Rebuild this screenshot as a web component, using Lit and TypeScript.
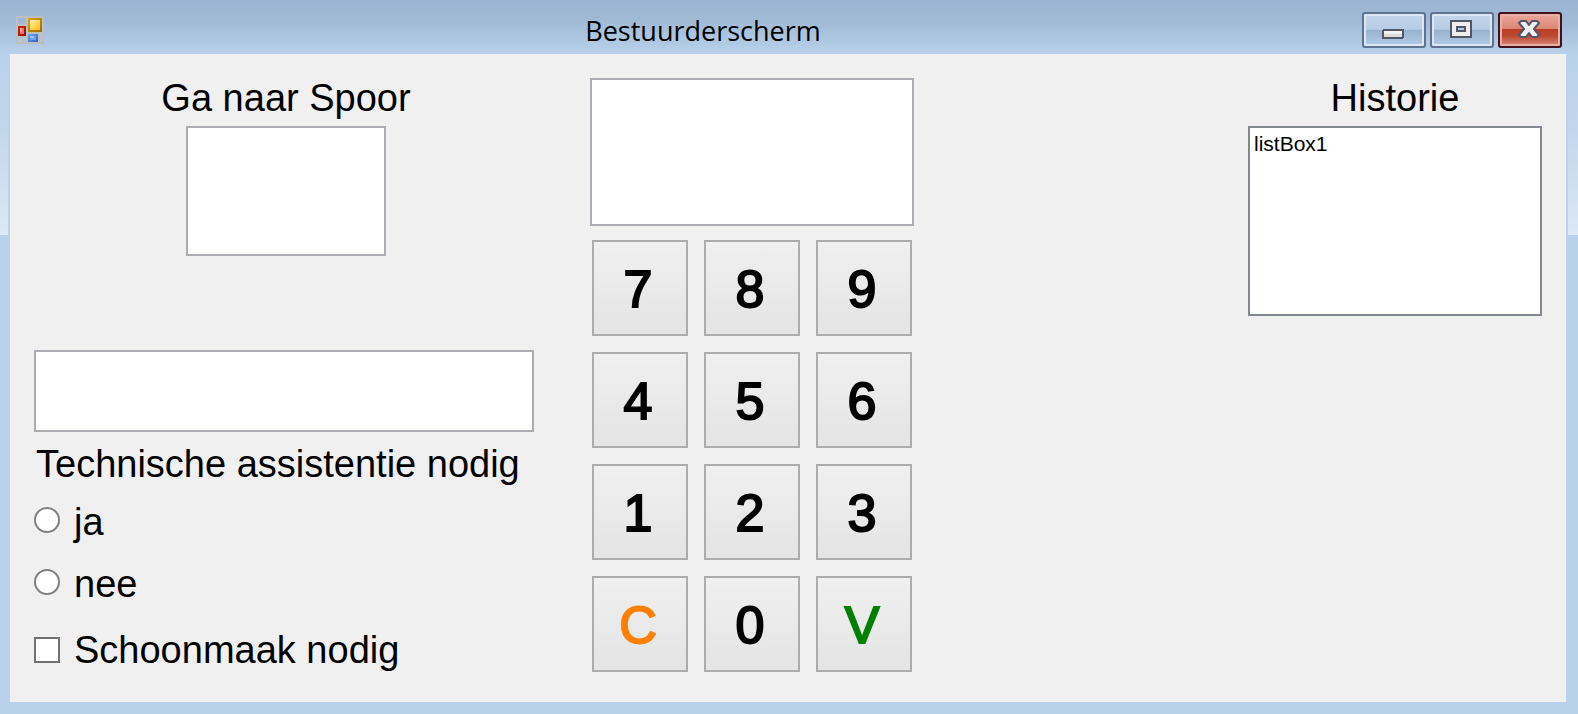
import { LitElement, html, css } from "lit";
import { customElement, property, state } from "lit/decorators.js";
import { classMap } from "lit/directives/class-map.js";

@customElement("window-title-bar")
export class WindowTitleBar extends LitElement {
  @property() caption = "";

  static styles = css`
    :host {
      display: flex;
      align-items: center;
      height: 54px;
      padding: 0 16px;
      box-sizing: border-box;
      background: linear-gradient(#9ab4d1, #a1bad6 40%, #b9d1ea);
    }
    .icon {
      flex: none;
      margin-top: 6px;
    }
    .caption {
      flex: 1;
      margin: 8px 0 0;
      text-align: center;
      font: 400 27px/40px "Open Sans", "Noto Sans", sans-serif;
      color: #000;
    }
    .buttons {
      display: flex;
      gap: 4px;
      margin-top: 6px;
    }
    .button {
      width: 64px;
      height: 36px;
      padding: 0;
      display: grid;
      place-items: center;
      border: 2px solid #5f7391;
      border-radius: 3px;
      background: linear-gradient(#c3d6ea, #b7cde5 48%, #98b1cd 50%, #b4cce6);
      box-shadow: inset 0 0 0 2px #dbe7f4;
    }
    .close {
      border-color: #43101f;
      background: linear-gradient(#e9a99c, #dc8675 46%, #b73e27 48%, #bb4730 68%, #d98a78);
      box-shadow: inset 0 0 0 2px #e8b0a5;
    }
    .glyph {
      display: block;
    }
  `;

  render() {
    return html`
      <svg class="icon" width="28" height="28" viewBox="0 0 28 28" shape-rendering="crispEdges" aria-hidden="true">
        <defs>
          <linearGradient id="y" x1="0" y1="0" x2="1" y2="1">
            <stop offset="0" stop-color="#fff0b0" /><stop offset="1" stop-color="#ffbe0a" />
          </linearGradient>
          <linearGradient id="yb" x1="0" y1="0" x2="1" y2="1">
            <stop offset="0" stop-color="#dba514" /><stop offset="1" stop-color="#996a00" />
          </linearGradient>
          <linearGradient id="b" x1="0" y1="0" x2="1" y2="1">
            <stop offset="0" stop-color="#6fa5e6" /><stop offset="1" stop-color="#2f60c4" />
          </linearGradient>
          <linearGradient id="r" x1="0" y1="0" x2="1" y2="1">
            <stop offset="0" stop-color="#d02a14" /><stop offset="1" stop-color="#841008" />
          </linearGradient>
        </defs>
        <path d="M1 1H27V27H1ZM11 1V27M1 9H11M1 21H11M11 17H27M23 17V27M7 21V27" fill="none" stroke="#bfbfbf" stroke-width="2" />
        <rect x="2" y="10" width="8" height="10" fill="url(#r)" />
        <rect x="4" y="12" width="4" height="6" fill="#e8786c" />
        <rect x="4" y="12" width="2" height="4" fill="#f2a39a" />
        <rect x="12" y="2" width="14" height="14" fill="url(#yb)" />
        <rect x="14" y="4" width="10" height="10" fill="url(#y)" />
        <rect x="12" y="18" width="10" height="8" fill="url(#b)" />
        <rect x="14" y="20" width="6" height="4" fill="#6ea0f4" />
        <rect x="14" y="20" width="4" height="2" fill="#9cc2fb" />
      </svg>
      <h1 class="caption">${this.caption}</h1>
      <div class="buttons">
        <button class="button" type="button" aria-label="Minimaliseren">
          <svg class="glyph" width="24" height="22" viewBox="0 0 24 22" shape-rendering="crispEdges">
            <rect x="1" y="11" width="20" height="8" rx="1" fill="#f2f2f2" stroke="#535666" stroke-width="2" />
            <rect x="2" y="15" width="18" height="3" fill="#dcdcdc" />
          </svg>
        </button>
        <button class="button" type="button" aria-label="Maximaliseren">
          <svg class="glyph" width="24" height="22" viewBox="0 0 24 22" shape-rendering="crispEdges">
            <path d="M1 2H21V18H1ZM7 8V12H15V8Z" fill="#eeeeee" stroke="#535666" stroke-width="2" fill-rule="evenodd" />
          </svg>
        </button>
        <button class="button close" type="button" aria-label="Sluiten">
          <svg class="glyph" width="24" height="22" viewBox="0 0 24 22">
            <path d="M3 2H8L11 6L14 2H19L21 4L16 10L21 16L19 18H14L11 14L8 18H3L1 16L6 10L1 4Z" fill="#f0f0f0" stroke="#535666" stroke-width="2" stroke-linejoin="round" />
          </svg>
        </button>
      </div>
    `;
  }
}

@customElement("app-root")
export class AppRoot extends LitElement {
  @state() private entry = "";

  private keys = ["7", "8", "9", "4", "5", "6", "1", "2", "3", "C", "0", "V"];

  static styles = css`
    :host {
      display: block;
      font-family: "Liberation Sans", Arial, sans-serif;
      color: #000;
    }
    * {
      box-sizing: border-box;
    }
    .window {
      display: flex;
      flex-direction: column;
      min-height: 100vh;
      background: #b9d1ea;
    }
    .frame {
      flex: 1;
      display: flex;
      padding: 0 12px 12px 10px;
      background:
        linear-gradient(#b9d1ea, #c2d6ec 40%, #dce8f5) 0 0 / 8px 181px no-repeat,
        linear-gradient(#b9d1ea, #c2d6ec 40%, #dce8f5) 100% 0 / 10px 181px no-repeat;
    }
    .form {
      flex: 1;
      display: grid;
      grid-template-columns: 500px 324px 1fr;
      column-gap: 56px;
      align-items: start;
      padding: 24px;
      background: #f0f0f0;
    }
    .stack {
      display: flex;
      flex-direction: column;
      align-items: center;
    }
    .history {
      justify-self: end;
    }
    .destination {
      padding-left: 4px;
    }
    .label,
    .choice {
      font-size: 38px;
      line-height: 40px;
    }
    .heading {
      margin-bottom: 8px;
    }
    .box {
      margin: 0;
      padding: 4px 8px;
      border: 2px solid #abadb3;
      border-radius: 0;
      background: #fff;
      font: 400 38px/40px "Liberation Sans", Arial, sans-serif;
      resize: none;
      outline: none;
    }
    .track {
      width: 200px;
      height: 130px;
    }
    .message {
      width: 100%;
      height: 82px;
      margin-top: 94px;
    }
    .group {
      align-self: stretch;
      display: flex;
      flex-direction: column;
      gap: 22px;
      margin: 12px 0 0;
      padding: 0;
      border: 0;
      min-width: 0;
    }
    .legend {
      padding: 0 0 0 2px;
      margin-bottom: 18px;
    }
    .choice {
      display: flex;
      align-items: center;
      gap: 14px;
    }
    .cleaning {
      align-self: stretch;
      margin-top: 26px;
    }
    .mark {
      appearance: none;
      width: 26px;
      height: 26px;
      margin: 0;
      border: 2px solid #707070;
      background: #fff;
    }
    .mark:checked {
      background: #404040;
      box-shadow: inset 0 0 0 4px #fff;
    }
    .round {
      margin-bottom: 4px;
      border-radius: 50%;
      border-color: #808080;
    }
    .display {
      width: 100%;
      height: 148px;
      margin-bottom: 14px;
    }
    .keypad {
      display: grid;
      grid-template-columns: repeat(3, 96px);
      gap: 16px;
    }
    .key {
      height: 96px;
      padding: 2px 4px 0 0;
      border: 2px solid #acacac;
      border-radius: 0;
      background: linear-gradient(#f0f0f0, #e4e4e4);
      color: #000;
      font: 400 52px/60px "Liberation Sans", Arial, sans-serif;
      -webkit-text-stroke: 2px currentColor;
    }
    .clear {
      color: #ff8000;
    }
    .confirm {
      color: #008000;
    }
    .list {
      width: 294px;
      height: 190px;
      margin: 0;
      padding: 4px 0;
      border: 2px solid #828790;
      border-radius: 0;
      background: #fff;
      color: #000;
      font: 400 21px/26px "Liberation Sans", Arial, sans-serif;
      overflow: hidden;
      outline: none;
    }
    .item {
      min-height: 26px;
      padding: 0 4px;
      font: inherit;
    }
  `;

  private press(key: string) {
    this.entry = key === "C" || key === "V" ? "" : this.entry + key;
  }

  render() {
    return html`
      <div class="window">
        <window-title-bar caption="Bestuurderscherm"></window-title-bar>
        <div class="frame">
          <main class="form">
            <section class="stack">
              <div class="stack destination">
                <label class="label heading" for="track">Ga naar Spoor</label>
                <textarea class="box track" id="track" readonly></textarea>
              </div>
              <input class="box message" type="text" aria-label="Melding" />
              <fieldset class="group">
                <legend class="label legend">Technische assistentie nodig</legend>
                <label class="choice"><input class="mark round" type="radio" name="assist" value="ja" />ja</label>
                <label class="choice"><input class="mark round" type="radio" name="assist" value="nee" />nee</label>
              </fieldset>
              <label class="choice cleaning"><input class="mark" type="checkbox" />Schoonmaak nodig</label>
            </section>
            <section class="stack">
              <textarea class="box display" aria-label="Invoer" readonly .value=${this.entry}></textarea>
              <div class="keypad">
                ${this.keys.map(
                  (key) => html`<button
                    type="button"
                    class=${classMap({ key: true, clear: key === "C", confirm: key === "V" })}
                    @click=${() => this.press(key)}
                  >${key}</button>`
                )}
              </div>
            </section>
            <section class="stack history">
              <label class="label heading" for="history">Historie</label>
              <select class="list" id="history" size="6">
                <option class="item">listBox1</option>
              </select>
            </section>
          </main>
        </div>
      </div>
    `;
  }
}
